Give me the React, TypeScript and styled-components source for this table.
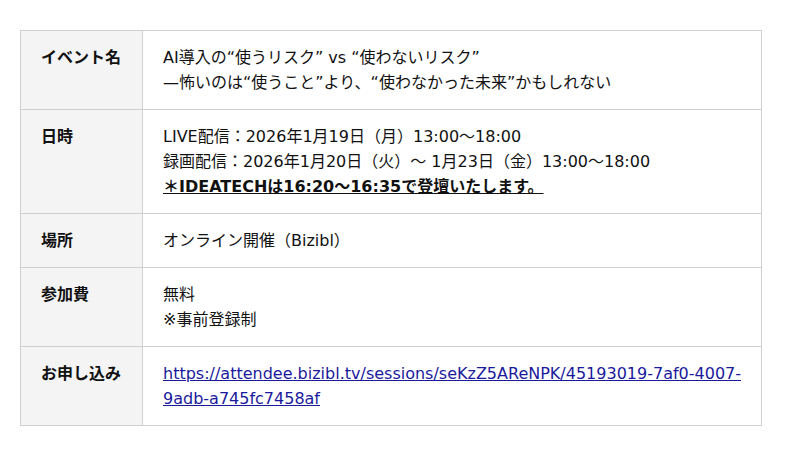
import React from 'react';
import styled, {createGlobalStyle} from 'styled-components';

const BORDER = '#cfcfcf';
const LABEL_BG = '#f4f4f4';
const TEXT = '#111111';
const LINK = '#1a1a9c';

const GlobalStyle = createGlobalStyle`
  html, body {
    margin: 0;
    padding: 0;
    background: #ffffff;
  }
  body {
    font-family: "DejaVu Sans", "Noto Sans CJK JP", sans-serif;
    color: ${TEXT};
  }
`;

const Page = styled.div`
  padding: 30px 38px 30px 20px;
`;

const InfoTable = styled.table`
  width: 742px;
  border-collapse: collapse;
  font-size: 16px;
  line-height: 25px;
`;

const LabelCell = styled.th`
  width: 81px;
  padding: 14px 20px 14px 20px;
  background: ${LABEL_BG};
  border: 1px solid ${BORDER};
  text-align: left;
  vertical-align: top;
  font-weight: bold;
  white-space: nowrap;
`;

const ValueCell = styled.td`
  padding: 14px 18px 14px 20px;
  border: 1px solid ${BORDER};
  vertical-align: top;
`;

const Line = styled.div<{$strong?: boolean}>`
  font-weight: ${({$strong}) => ($strong ? 'bold' : 'normal')};
  text-decoration: ${({$strong}) => ($strong ? 'underline' : 'none')};
`;

const Link = styled.a`
  color: ${LINK};
  text-decoration: underline;
  overflow-wrap: break-word;
`;

interface RowProps {
  label: string;
  children: React.ReactNode;
}

const Row = ({label, children}: RowProps) => (
  <tr>
    <LabelCell>{label}</LabelCell>
    <ValueCell>{children}</ValueCell>
  </tr>
);

const App = () => (
  <>
    <GlobalStyle />
    <Page>
      <InfoTable>
        <tbody>
          <Row label="イベント名">
            <Line>AI導入の“使うリスク” vs “使わないリスク”</Line>
            <Line>—怖いのは“使うこと”より、“使わなかった未来”かもしれない</Line>
          </Row>
          <Row label="日時">
            <Line>LIVE配信：2026年1月19日（月）13:00〜18:00</Line>
            <Line>録画配信：2026年1月20日（火）〜 1月23日（金）13:00〜18:00</Line>
            <Line $strong>＊IDEATECHは16:20〜16:35で登壇いたします。</Line>
          </Row>
          <Row label="場所">
            <Line>オンライン開催（Bizibl）</Line>
          </Row>
          <Row label="参加費">
            <Line>無料</Line>
            <Line>※事前登録制</Line>
          </Row>
          <Row label="お申し込み">
            <Link href="#">
              https://attendee.bizibl.tv/sessions/seKzZ5AReNPK/45193019-7af0-4007-9adb-a745fc7458af
            </Link>
          </Row>
        </tbody>
      </InfoTable>
    </Page>
  </>
);

export default App;
